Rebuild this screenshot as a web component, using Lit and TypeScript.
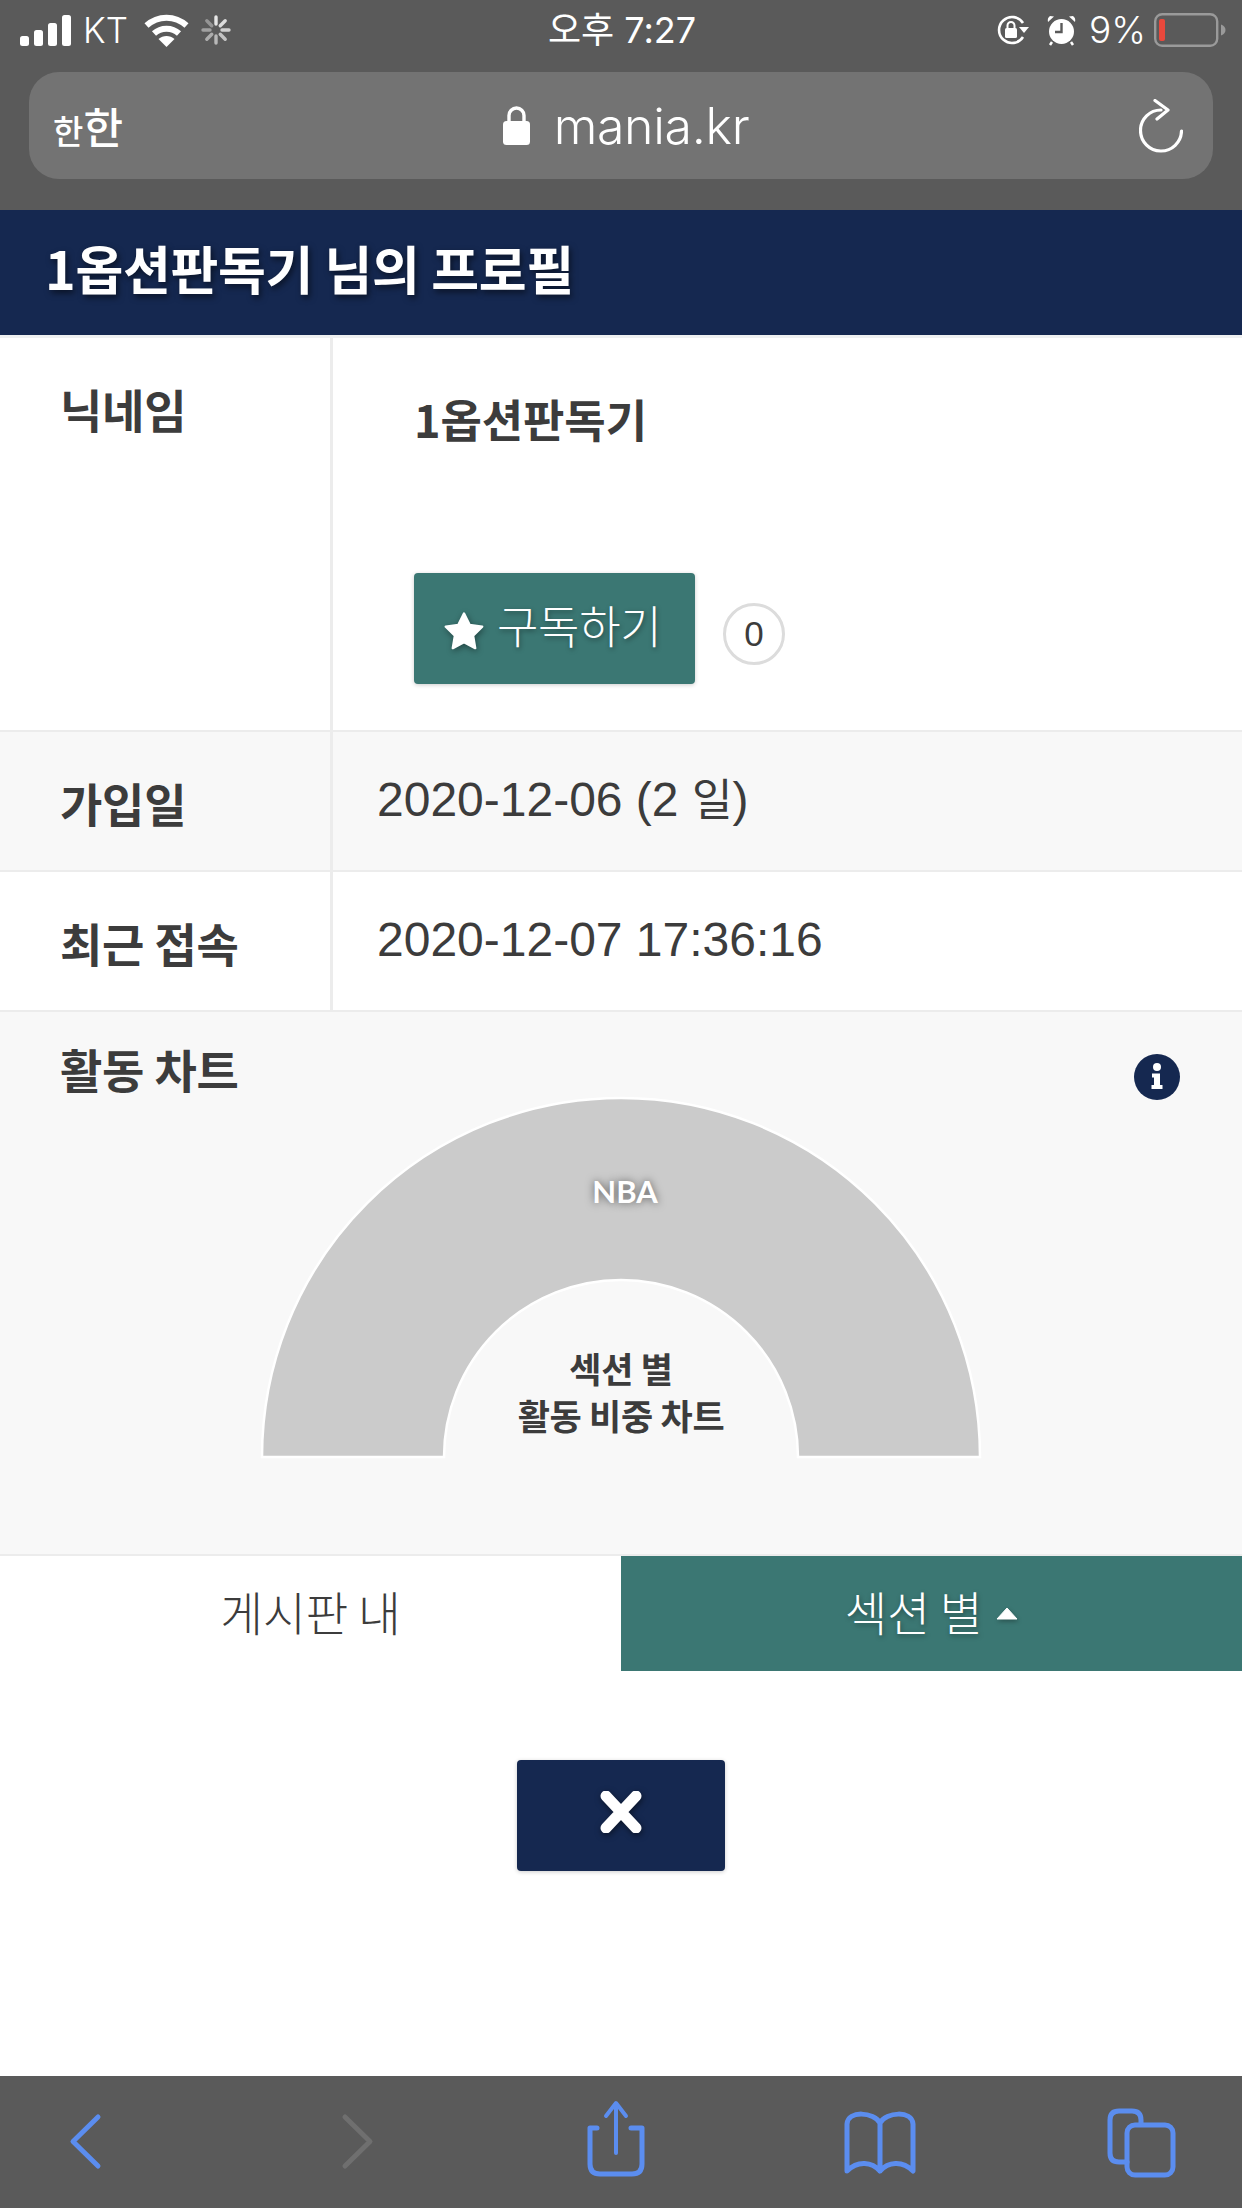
import { LitElement, html, css, svg, unsafeCSS } from "lit";
import { customElement } from "lit/decorators.js";

const KR = unsafeCSS(`"Noto Sans CJK KR", "Liberation Sans", sans-serif`);
const spokes = [0, 45, 90, 135, 180, 225, 270, 315];

@customElement("app-root")
export class AppRoot extends LitElement {
  static styles = css`
    :host { display: block; width: 1242px; height: 2208px; overflow: hidden; background: #fff; color: #3c3c3c; font-family: "Liberation Sans", "Noto Sans CJK KR", sans-serif; }
    * { box-sizing: border-box; }
    svg { display: block; flex: none; }
    .page { display: flex; flex-direction: column; height: 2208px; }
    .chrome { height: 210px; background: #5a5a5a; color: #fff; flex: none; }
    .status { height: 72px; padding: 0 16px 12px 20px; display: grid; grid-template-columns: 1fr auto 1fr; align-items: center; }
    .st-left, .st-right { display: flex; align-items: center; }
    .st-right { justify-content: flex-end; }
    .carrier { font-family: Inter, sans-serif; font-size: 35px; font-weight: 300; margin: 0 16px 0 12px; line-height: 40px; }
    .spinner { margin-left: 12px; }
    .time { font-family: Inter, "Noto Sans CJK KR", sans-serif; font-size: 36px; font-weight: 400; line-height: 40px; margin-right: 2px; }
    .pct { font-family: Inter, sans-serif; font-size: 37px; font-weight: 300; margin: 0 8px 0 13px; line-height: 40px; }
    .rot { margin-right: 0; }
    .alarm { margin-left: 17px; }
    .address { margin: 0 29px; height: 107px; border-radius: 30px; background: #737373; display: grid; grid-template-columns: 1fr auto 1fr; align-items: center; padding: 0 30px 0 24px; }
    .han { font-family: ${KR}; line-height: 1; display: flex; align-items: flex-end; font-weight: 500; }
    .han .s { font-size: 33px; }
    .han .b { font-size: 43px; }
    .site { display: flex; align-items: center; gap: 24px; font-size: 50px; line-height: 60px; font-family: Inter, sans-serif; font-weight: 300; letter-spacing: -0.3px; padding-left: 16px; }
    .reload { justify-self: end; }
    .title { height: 125px; background: #152850; color: #fff; flex: none; display: flex; align-items: center; padding: 0 0 10px 45px; font-family: ${KR}; font-size: 52px; font-weight: 700; letter-spacing: -0.3px; text-shadow: 2px 3px 6px rgba(0,0,0,.55); }
    .top-line { height: 3px; background: #eef0f1; flex: none; }
    .row { display: grid; grid-template-columns: 333px 1fr; border-bottom: 2px solid #ececec; flex: none; }
    .row.grey { background: #f8f8f8; }
    .label { border-right: 3px solid #ececec; padding-left: 60px; font-family: ${KR}; font-size: 46px; font-weight: 700; letter-spacing: -0.2px; color: #3c3c3c; }
    .r1 { height: 394px; }
    .r1 .label { padding-top: 37px; line-height: 66px; }
    .r2, .r3 { height: 140px; align-items: stretch; }
    .r2 .label, .r3 .label { display: flex; align-items: center; padding-top: 1px; }
    .value { font-size: 48px; line-height: 60px; display: flex; align-items: center; padding: 0 0 3px 44px; color: #3c3c3c; }
    .value .k { font-family: ${KR}; font-weight: 400; font-size: 44px; line-height: 40px; }
    .nick-cell { padding: 48px 0 0 81px; }
    .nick { font-family: ${KR}; font-size: 45px; font-weight: 700; line-height: 66px; letter-spacing: -0.1px; }
    .sub-line { display: flex; align-items: center; margin-top: 121px; }
    .subscribe { width: 281px; height: 111px; border-radius: 4px; background: #3b7773; color: #fff; display: flex; align-items: center; padding-left: 30px; gap: 13px; box-shadow: 0 1px 4px rgba(0,0,0,.2); font-family: ${KR}; font-size: 45px; font-weight: 300; letter-spacing: -0.3px; text-shadow: 1px 2px 5px rgba(0,0,0,.4); }
    .subscribe span { position: relative; top: -4px; }
    .star { margin-top: 4px; filter: drop-shadow(1px 2px 3px rgba(0,0,0,.4)); }
    .count { width: 62px; height: 62px; margin: 10px 0 0 28px; border-radius: 50%; border: 3px solid #dcdcdc; display: flex; align-items: center; justify-content: center; font-size: 35px; }
    .chart-sec { height: 544px; flex: none; background: #f8f8f8; border-bottom: 2px solid #ececec; }
    .chart-head { display: flex; justify-content: space-between; padding: 25px 62px 0 60px; height: 83px; }
    .chart-title { font-family: ${KR}; font-size: 46px; font-weight: 700; line-height: 62px; letter-spacing: -0.2px; }
    .info { margin-top: 17px; }
    .chart { position: relative; width: 724px; height: 372px; margin: -4px auto 0; }
    .nba { position: absolute; left: 0; right: 0; top: 80px; padding-left: 8px; text-align: center; color: #fff; font-family: Lato, sans-serif; font-size: 31px; font-weight: 700; line-height: 40px; text-shadow: 0 0 8px rgba(0,0,0,.55); }
    .center-label { position: absolute; left: 0; right: 0; top: 253px; text-align: center; font-family: ${KR}; font-size: 35px; font-weight: 700; line-height: 47px; letter-spacing: -0.3px; color: #3c3c3c; }
    .tabs { display: grid; grid-template-columns: 1fr 1fr; height: 115px; flex: none; font-family: ${KR}; font-size: 46.5px; font-weight: 300; }
    .tab { display: flex; align-items: center; justify-content: center; gap: 14px; letter-spacing: -0.2px; padding-bottom: 7px; }
    .tab.on { background: #3b7773; color: #fff; text-shadow: 1px 2px 5px rgba(0,0,0,.35); }
    .tab.on svg { margin-top: 6px; filter: drop-shadow(1px 2px 2px rgba(0,0,0,.3)); }
    .close-wrap { flex: 1; display: flex; justify-content: center; padding-top: 89px; }
    .close { width: 208px; height: 111px; background: #152850; border-radius: 4px; display: flex; align-items: center; justify-content: center; padding-bottom: 8px; box-shadow: 0 1px 4px rgba(0,0,0,.2); }
    .x { filter: drop-shadow(1px 2px 3px rgba(0,0,0,.5)); }
    .toolbar { height: 132px; flex: none; background: #5a5a5a; }
  `;

  render() {
    return html`<div class="page">
      <div class="chrome">
        <div class="status">
          <div class="st-left">
            <svg width="51" height="31" viewBox="0 0 51 31" fill="#fff">
              <rect x="0" y="21" width="9" height="10" rx="2.5"/><rect x="14" y="15" width="9" height="16" rx="2.5"/><rect x="28" y="8" width="9" height="23" rx="2.5"/><rect x="42" y="0" width="9" height="31" rx="2.5"/>
            </svg>
            <span class="carrier">KT</span>
            <svg width="45" height="33" viewBox="0 0 45 33" fill="none" stroke="#fff" stroke-width="6">
              <path d="M2.5 11.5C14 1 31 1 42.5 11.5"/><path d="M10 19.5C17 13 28 13 35 19.5"/><path d="M22.5 33L14.5 25C19 21 26 21 30.5 25Z" fill="#fff" stroke="none"/>
            </svg>
            <svg class="spinner" width="30" height="30" viewBox="0 0 30 30" stroke-width="3.4" stroke-linecap="round">
              ${spokes.map((a, i) => svg`<line x1="15" y1="2" x2="15" y2="9" stroke="#fff" stroke-opacity="${0.85 - i * 0.07}" transform="rotate(${a} 15 15)"/>`)}
            </svg>
          </div>
          <div class="time">오후 7:27</div>
          <div class="st-right">
            <svg class="rot" width="34" height="30" viewBox="0 0 34 30" fill="none">
              <path d="M27 8A13 13 0 1 0 27 22" stroke="#fff" stroke-width="2.6"/>
              <path d="M23 12L33 12L28 18Z" fill="#fff"/>
              <rect x="9" y="13" width="12" height="10" rx="1.5" fill="#fff"/>
              <path d="M11.5 13V10.5A3.5 3.5 0 0 1 18.5 10.5V13" stroke="#fff" stroke-width="2"/>
            </svg>
            <svg class="alarm" width="29" height="31" viewBox="0 0 29 31">
              <circle cx="14.5" cy="16.5" r="12.5" fill="#fff"/>
              <path d="M1 7L7 1.5L3 1Q0 3 1 7ZM28 7L22 1.5L26 1Q29 3 28 7Z" fill="#fff"/>
              <path d="M5 27L3 30M24 27L26 30" stroke="#fff" stroke-width="2.5"/>
              <path d="M14.5 8V17H8" fill="none" stroke="#5a5a5a" stroke-width="2.4"/>
            </svg>
            <span class="pct">9%</span>
            <svg width="72" height="34" viewBox="0 0 72 34" fill="none">
              <rect x="1.2" y="1.2" width="62" height="31.6" rx="7" stroke="#9a9a9a" stroke-width="2.4"/>
              <rect x="5" y="6" width="6" height="22" rx="2" fill="#e8483c"/>
              <path d="M67 11.5C70 12.5 71.5 14.5 71.5 17C71.5 19.5 70 21.5 67 22.5Z" fill="#9a9a9a"/>
            </svg>
          </div>
        </div>
        <div class="address">
          <div class="han"><span class="s">한</span><span class="b">한</span></div>
          <div class="site">
            <svg width="27" height="39" viewBox="0 0 27 39" fill="none">
              <rect x="0" y="15" width="27" height="24" rx="3.5" fill="#fff"/>
              <path d="M6 16V9.5A7.5 7.5 0 0 1 21 9.5V16" stroke="#fff" stroke-width="3.4"/>
            </svg>
            <span>mania.kr</span>
          </div>
          <svg class="reload" width="44" height="54" viewBox="0 0 44 54" fill="none" stroke="#fff" stroke-width="3.2" stroke-linecap="round" stroke-linejoin="round">
            <path d="M22 11A20.5 20.5 0 1 0 42.5 32"/>
            <path d="M16 1.5L29 11L18 20"/>
          </svg>
        </div>
      </div>
      <div class="title">1옵션판독기 님의 프로필</div>
      <div class="top-line"></div>
      <div class="row r1">
        <div class="label">닉네임</div>
        <div class="nick-cell">
          <div class="nick">1옵션판독기</div>
          <div class="sub-line">
            <div class="subscribe">
              <svg class="star" width="40" height="38" viewBox="0 0 40 38"><path d="M20 1.5L25.6 12.9L38.2 14.7L29.1 23.6L31.2 36.1L20 30.2L8.8 36.1L10.9 23.6L1.8 14.7L14.4 12.9Z" fill="#fff" stroke="#fff" stroke-width="2.4" stroke-linejoin="round"/></svg>
              <span>구독하기</span>
            </div>
            <div class="count">0</div>
          </div>
        </div>
      </div>
      <div class="row r2 grey">
        <div class="label">가입일</div>
        <div class="value"><span>2020-12-06 (2 <span class="k">일</span>)</span></div>
      </div>
      <div class="row r3">
        <div class="label">최근 접속</div>
        <div class="value">2020-12-07 17:36:16</div>
      </div>
      <div class="chart-sec">
        <div class="chart-head">
          <div class="chart-title">활동 차트</div>
          <svg class="info" width="46" height="46" viewBox="0 0 46 46">
            <circle cx="23" cy="23" r="23" fill="#152850"/>
            <circle cx="23" cy="13" r="4" fill="#fff"/>
            <path d="M18 19.5H26V31H28.5V35H17.5V31H20V23.5H18Z" fill="#fff"/>
          </svg>
        </div>
        <div class="chart">
          <svg width="724" height="372" viewBox="0 0 724 372">
            <path d="M3 366A359 359 0 0 1 721 366H539A177 177 0 0 0 185 366Z" fill="#cbcbcb" stroke="#fff" stroke-width="2.5"/>
          </svg>
          <div class="nba">NBA</div>
          <div class="center-label">섹션 별<br />활동 비중 차트</div>
        </div>
      </div>
      <div class="tabs">
        <div class="tab">게시판 내</div>
        <div class="tab on">
          <span>섹션 별</span>
          <svg width="22" height="13" viewBox="0 0 22 13"><path d="M11 1L21 12H1Z" fill="#fff" stroke="#fff" stroke-linejoin="round"/></svg>
        </div>
      </div>
      <div class="close-wrap">
        <div class="close">
          <svg class="x" width="42" height="42" viewBox="0 0 42 42">
            <path d="M6 5L36 37M36 5L6 37" stroke="#fff" stroke-width="11" stroke-linecap="round"/>
          </svg>
        </div>
      </div>
      <div class="toolbar">
        <svg width="1242" height="132" viewBox="0 0 1242 132" fill="none" stroke-linecap="round" stroke-linejoin="round">
          <path d="M98 41L73 65.500L98 90" stroke="#5b8def" stroke-width="5"/>
          <path d="M345 41L370 65.500L345 90" stroke="#6f6f6f" stroke-width="5"/>
          <g stroke="#5b8def" stroke-width="5">
            <path d="M597 52H590V88C590 95 594 98 600 98H632C638 98 642 95 642 88V52H631"/>
            <path d="M616 28V77" stroke-width="4"/>
            <path d="M606 40L616 27L626 40" stroke-width="4"/>
            <path d="M880 47C874 36 848 34 847 48V95C858 84 872 86 880 95C888 86 902 84 913 95V48C912 34 886 36 880 47ZM880 47V95" stroke-width="5"/>
            <path d="M1141 48V44C1141 38 1138 35 1132 35H1119C1113 35 1110 38 1110 44V77C1110 83 1113 86 1119 86H1127" stroke-width="5"/>
            <rect x="1127" y="49" width="46" height="50" rx="8" stroke-width="5"/>
          </g>
        </svg>
      </div>
    </div>`;
  }
}
